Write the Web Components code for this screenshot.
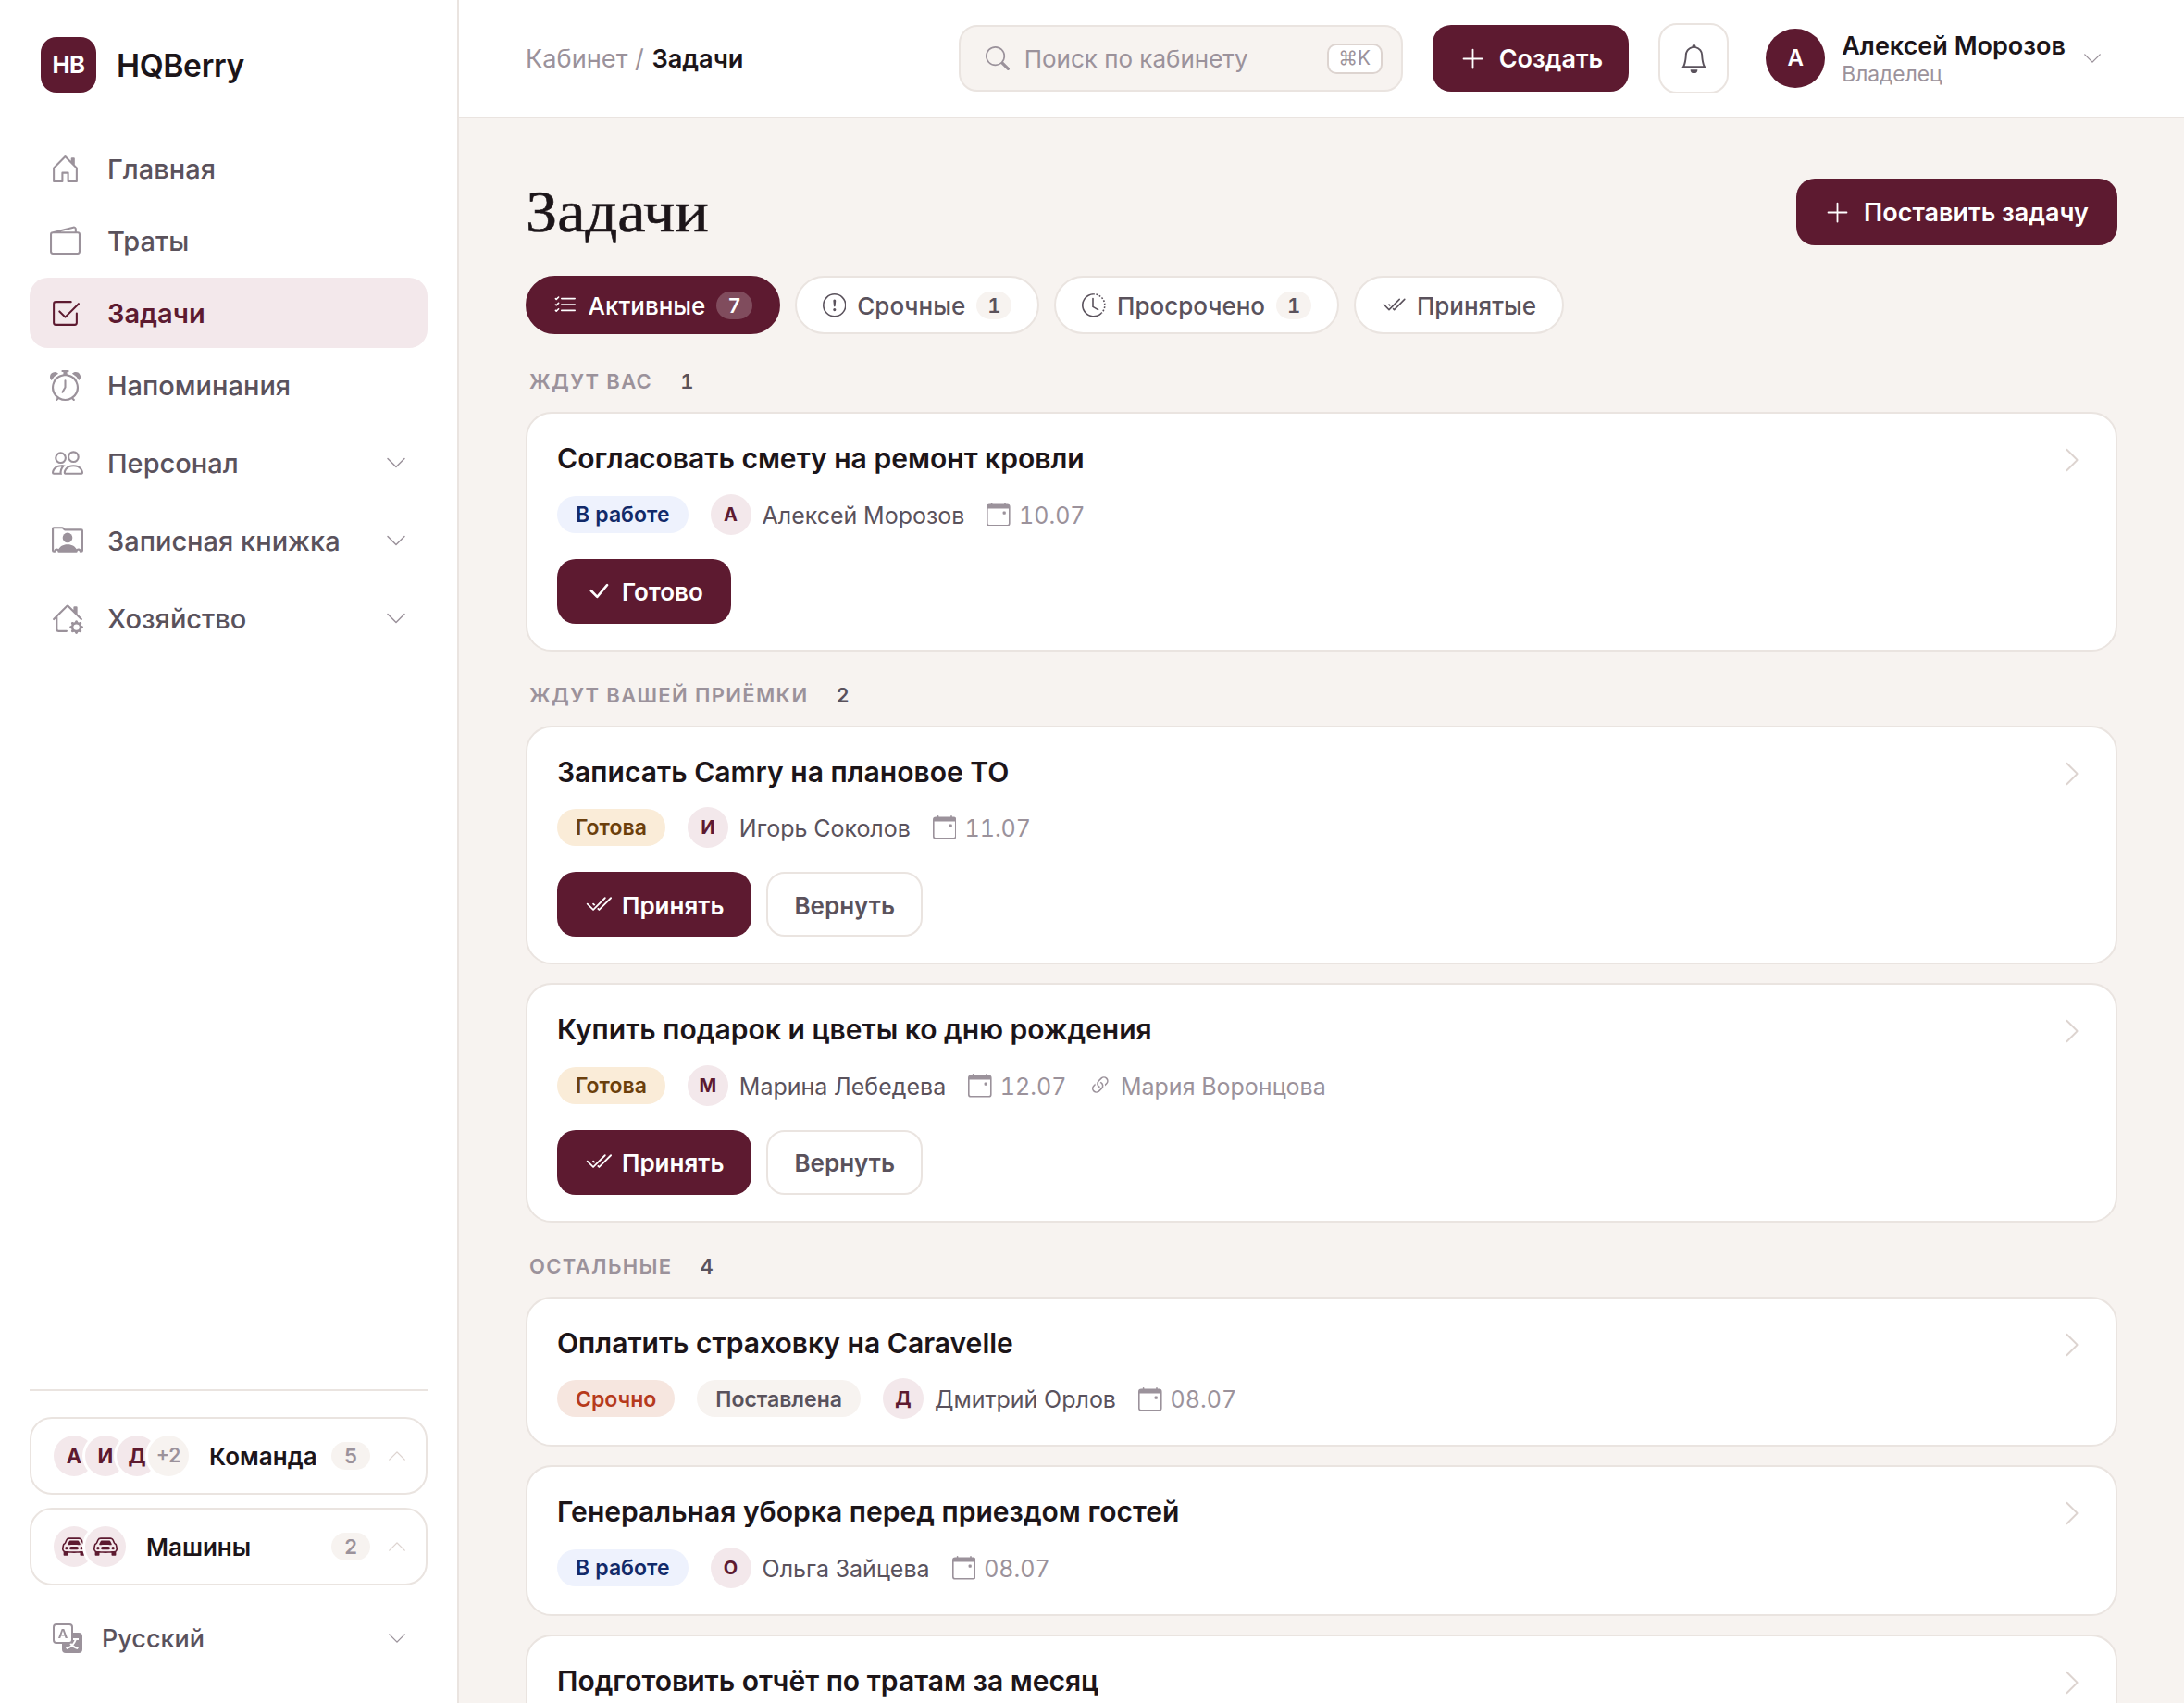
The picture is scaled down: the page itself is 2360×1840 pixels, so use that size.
<!DOCTYPE html>
<html lang="ru">
<head>
<meta charset="utf-8">
<title>HQBerry</title>
<style>
    html, body {
        margin: 0;
        height: 100%;
    }
    body {
        --brand: #5d1a30;
        --brand-soft: #f3e8eb;
        --ink: #1c1519;
        --text: #5a525c;
        --muted: #9b929b;
        --line: #eae4e0;
        --faint: #ddd4d0;
        --bg: #f7f3f0;
        background: var(--bg);
        color: var(--ink);
        font-family: Inter, "Liberation Sans", sans-serif;
        font-size: 28px;
        line-height: 1.2;
        overflow: hidden;
    }
</style>
</head>
<body>
<hq-app></hq-app>

<script>
const ICONS = {
    house: '<path d="M8.354 1.146a.5.5 0 0 0-.708 0l-6 6A.5.5 0 0 0 1.5 7.5v7a.5.5 0 0 0 .5.5h4.5a.5.5 0 0 0 .5-.5v-4h2v4a.5.5 0 0 0 .5.5H14a.5.5 0 0 0 .5-.5v-7a.5.5 0 0 0-.146-.354L13 5.793V2.5a.5.5 0 0 0-.5-.5h-1a.5.5 0 0 0-.5.5v1.293zM2.5 14V7.707l5.5-5.5 5.5 5.5V14H10v-4a.5.5 0 0 0-.5-.5h-3a.5.5 0 0 0-.5.5v4z"/>',
    wallet: '<path d="M12.136.326A1.5 1.5 0 0 1 14 1.78V3h.5A1.5 1.5 0 0 1 16 4.5v9a1.5 1.5 0 0 1-1.5 1.5h-13A1.5 1.5 0 0 1 0 13.5v-9a1.5 1.5 0 0 1 1.432-1.499zM5.562 3H13V1.78a.5.5 0 0 0-.621-.484zM1.5 4a.5.5 0 0 0-.5.5v9a.5.5 0 0 0 .5.5h13a.5.5 0 0 0 .5-.5v-9a.5.5 0 0 0-.5-.5z"/>',
    tasks: '<path d="M3 14.5A1.5 1.5 0 0 1 1.5 13V3A1.5 1.5 0 0 1 3 1.5h8a.5.5 0 0 1 0 1H3a.5.5 0 0 0-.5.5v10a.5.5 0 0 0 .5.5h10a.5.5 0 0 0 .5-.5V8a.5.5 0 0 1 1 0v5a1.5 1.5 0 0 1-1.5 1.5z"/><path d="m8.354 10.354 7-7a.5.5 0 0 0-.708-.708L8 9.293 5.354 6.646a.5.5 0 1 0-.708.708l3 3a.5.5 0 0 0 .708 0"/>',
    alarm: '<path d="M8.5 5.5a.5.5 0 0 0-1 0v3.362l-1.429 2.38a.5.5 0 1 0 .858.515l1.5-2.5A.5.5 0 0 0 8.5 9z"/><path d="M6.5 0a.5.5 0 0 0 0 1H7v1.07a7.001 7.001 0 0 0-3.273 12.474l-.602.602a.5.5 0 0 0 .707.708l.746-.746A6.97 6.97 0 0 0 8 16a6.97 6.97 0 0 0 3.422-.892l.746.746a.5.5 0 0 0 .707-.708l-.601-.602A7.001 7.001 0 0 0 9 2.07V1h.5a.5.5 0 0 0 0-1zm1.038 3.018a6 6 0 0 1 .924 0 6 6 0 1 1-.924 0M0 3.5c0 .753.333 1.429.86 1.887A8.04 8.04 0 0 1 4.387 1.86 2.5 2.5 0 0 0 0 3.5M13.5 1c-.753 0-1.429.333-1.887.86a8.04 8.04 0 0 1 3.527 3.527A2.5 2.5 0 0 0 13.5 1"/>',
    people: '<path d="M15 14s1 0 1-1-1-4-5-4-5 3-5 4 1 1 1 1zm-7.978-1L7 12.996c.001-.264.167-1.03.76-1.72C8.312 10.629 9.282 10 11 10c1.717 0 2.687.63 3.24 1.276.593.69.758 1.457.76 1.72l-.008.002-.014.002zM11 7a2 2 0 1 0 0-4 2 2 0 0 0 0 4m3-2a3 3 0 1 1-6 0 3 3 0 0 1 6 0M6.936 9.28a6 6 0 0 0-1.23-.247A7 7 0 0 0 5 9c-4 0-5 3-5 4q0 1 1 1h4.216A2.24 2.24 0 0 1 5 13c0-1.01.377-2.042 1.09-2.904.243-.294.526-.569.846-.816M4.92 10A5.5 5.5 0 0 0 4 13H1c0-.26.164-1.03.76-1.724.545-.636 1.492-1.256 3.16-1.275ZM1.5 5.5a3 3 0 1 1 6 0 3 3 0 0 1-6 0m3-2a2 2 0 1 0 0 4 2 2 0 0 0 0-4"/>',
    rolodex: '<path d="M8 9.05a2.5 2.5 0 1 0 0-5 2.5 2.5 0 0 0 0 5"/><path d="M1 1a1 1 0 0 0-1 1v11a1 1 0 0 0 1 1h.5a.5.5 0 0 0 .5-.5.5.5 0 0 1 1 0 .5.5 0 0 0 .5.5h9a.5.5 0 0 0 .5-.5.5.5 0 0 1 1 0 .5.5 0 0 0 .5.5h.5a1 1 0 0 0 1-1V3a1 1 0 0 0-1-1H6.707L6 1.293A1 1 0 0 0 5.293 1zm0 1h4.293L6 2.707A1 1 0 0 0 6.707 3H15v10h-.085a1.5 1.5 0 0 0-2.4-.63C11.885 11.223 10.554 10 8 10c-2.555 0-3.886 1.224-4.514 2.37a1.5 1.5 0 0 0-2.4.63H1z"/>',
    houseGear: '<path d="M7.293 1.5a1 1 0 0 1 1.414 0L11 3.793V2.5a.5.5 0 0 1 .5-.5h1a.5.5 0 0 1 .5.5v3.293l2.354 2.353a.5.5 0 0 1-.708.708L8 2.207l-5 5V13.5a.5.5 0 0 0 .5.5h4a.5.5 0 0 1 0 1h-4A1.5 1.5 0 0 1 2 13.5V8.207l-.646.647a.5.5 0 1 1-.708-.708z"/><path d="M11.886 9.46c.18-.613 1.048-.613 1.229 0l.043.148a.64.64 0 0 0 .921.382l.136-.074c.561-.306 1.175.308.87.869l-.075.136a.64.64 0 0 0 .382.92l.149.045c.612.18.612 1.048 0 1.229l-.15.043a.64.64 0 0 0-.38.921l.074.136c.305.561-.309 1.175-.87.87l-.136-.075a.64.64 0 0 0-.92.382l-.045.149c-.18.612-1.048.612-1.229 0l-.043-.15a.64.64 0 0 0-.921-.38l-.136.074c-.561.305-1.175-.309-.87-.87l.075-.136a.64.64 0 0 0-.382-.92l-.148-.044c-.613-.181-.613-1.049 0-1.23l.148-.043a.64.64 0 0 0 .382-.921l-.074-.136c-.306-.561.308-1.175.869-.87l.136.075a.64.64 0 0 0 .92-.382zM14 12.5a1.5 1.5 0 1 0-3 0 1.5 1.5 0 0 0 3 0"/>',
    search: '<path d="M11.742 10.344a6.5 6.5 0 1 0-1.397 1.398h-.001q.044.06.098.115l3.85 3.85a1 1 0 0 0 1.415-1.414l-3.85-3.85a1 1 0 0 0-.115-.1zM12 6.5a5.5 5.5 0 1 1-11 0 5.5 5.5 0 0 1 11 0"/>',
    bell: '<path d="M8 16a2 2 0 0 0 2-2H6a2 2 0 0 0 2 2M8 1.918l-.797.161A4 4 0 0 0 4 6c0 .628-.134 2.197-.459 3.742-.16.767-.376 1.566-.663 2.258h10.244c-.287-.692-.502-1.49-.663-2.258C12.134 8.197 12 6.628 12 6a4 4 0 0 0-3.203-3.92zM14.22 12c.223.447.481.801.78 1H1c.299-.199.557-.553.78-1C2.68 10.2 3 6.88 3 6c0-2.42 1.72-4.44 4.005-4.901a1 1 0 1 1 1.99 0A5 5 0 0 1 13 6c0 .88.32 4.2 1.22 6"/>',
    plus: '<path d="M8 2a.5.5 0 0 1 .5.5v5h5a.5.5 0 0 1 0 1h-5v5a.5.5 0 0 1-1 0v-5h-5a.5.5 0 0 1 0-1h5v-5A.5.5 0 0 1 8 2"/>',
    down: '<path d="M1.646 4.646a.5.5 0 0 1 .708 0L8 10.293l5.646-5.647a.5.5 0 0 1 .708.708l-6 6a.5.5 0 0 1-.708 0l-6-6a.5.5 0 0 1 0-.708"/>',
    up: '<path d="M7.646 4.646a.5.5 0 0 1 .708 0l6 6a.5.5 0 0 1-.708.708L8 5.707l-5.646 5.647a.5.5 0 0 1-.708-.708z"/>',
    right: '<path d="M4.646 1.646a.5.5 0 0 1 .708 0l6 6a.5.5 0 0 1 0 .708l-6 6a.5.5 0 0 1-.708-.708L10.293 8 4.646 2.354a.5.5 0 0 1 0-.708"/>',
    list: '<path d="M5 11.5a.5.5 0 0 1 .5-.5h9a.5.5 0 0 1 0 1h-9a.5.5 0 0 1-.5-.5m0-4a.5.5 0 0 1 .5-.5h9a.5.5 0 0 1 0 1h-9a.5.5 0 0 1-.5-.5m0-4a.5.5 0 0 1 .5-.5h9a.5.5 0 0 1 0 1h-9a.5.5 0 0 1-.5-.5M3.854 2.146a.5.5 0 0 1 0 .708l-1.5 1.5a.5.5 0 0 1-.708 0l-.5-.5a.5.5 0 1 1 .708-.708L2 3.293l1.146-1.147a.5.5 0 0 1 .708 0m0 4a.5.5 0 0 1 0 .708l-1.5 1.5a.5.5 0 0 1-.708 0l-.5-.5a.5.5 0 1 1 .708-.708L2 7.293l1.146-1.147a.5.5 0 0 1 .708 0m0 4a.5.5 0 0 1 0 .708l-1.5 1.5a.5.5 0 0 1-.708 0l-.5-.5a.5.5 0 0 1 .708-.708l.146.147 1.146-1.147a.5.5 0 0 1 .708 0"/>',
    alert: '<path d="M8 15A7 7 0 1 1 8 1a7 7 0 0 1 0 14m0 1A8 8 0 1 0 8 0a8 8 0 0 0 0 16"/><path d="M7.002 11a1 1 0 1 1 2 0 1 1 0 0 1-2 0M7.1 4.995a.905.905 0 1 1 1.8 0l-.35 3.507a.552.552 0 0 1-1.1 0z"/>',
    clock: '<path d="M8.515 1.019A7 7 0 0 0 8 1V0a8 8 0 0 1 .589.022zm2.004.45a7 7 0 0 0-.985-.299l.219-.976q.576.129 1.126.342zm1.37.71a7 7 0 0 0-.439-.27l.493-.87a8 8 0 0 1 .979.654l-.615.789a7 7 0 0 0-.418-.302zm1.834 1.79a7 7 0 0 0-.653-.796l.724-.69q.406.429.747.91zm.744 1.352a7 7 0 0 0-.214-.468l.893-.45a8 8 0 0 1 .45 1.088l-.95.313a7 7 0 0 0-.179-.483m.53 2.507a7 7 0 0 0-.1-1.025l.985-.17q.1.58.116 1.17zm-.131 1.538q.05-.254.081-.51l.993.123a8 8 0 0 1-.23 1.155l-.964-.267q.069-.247.12-.501m-.952 2.379q.276-.436.486-.908l.914.405q-.24.54-.555 1.038zm-.964 1.205q.183-.183.35-.378l.758.653a8 8 0 0 1-.401.432z"/><path d="M8 1a7 7 0 1 0 4.95 11.95l.707.707A8.001 8.001 0 1 1 8 0z"/><path d="M7.5 3a.5.5 0 0 1 .5.5v5.21l3.248 1.856a.5.5 0 0 1-.496.868l-3.5-2A.5.5 0 0 1 7 9V3.5a.5.5 0 0 1 .5-.5"/>',
    checkAll: '<path d="M12.354 4.354a.5.5 0 0 0-.708-.708L5 10.293 1.854 7.146a.5.5 0 1 0-.708.708l3.5 3.5a.5.5 0 0 0 .708 0zm-4.208 7-.896-.897.707-.707.543.543 6.646-6.647a.5.5 0 0 1 .708.708l-7 7a.5.5 0 0 1-.708 0"/><path d="m5.354 7.146.896.897-.707.707-.897-.896a.5.5 0 1 1 .708-.708"/>',
    check: '<path d="M12.736 3.97a.733.733 0 0 1 1.047 0c.286.289.29.756.01 1.05L7.88 12.01a.733.733 0 0 1-1.065.02L3.217 8.384a.757.757 0 0 1 0-1.06.733.733 0 0 1 1.047 0l3.052 3.093 5.4-6.425z"/>',
    calendar: '<path d="M11 6.5a.5.5 0 0 1 .5-.5h1a.5.5 0 0 1 .5.5v1a.5.5 0 0 1-.5.5h-1a.5.5 0 0 1-.5-.5z"/><path d="M3.5 0a.5.5 0 0 1 .5.5V1h8V.5a.5.5 0 0 1 1 0V1h1a2 2 0 0 1 2 2v11a2 2 0 0 1-2 2H2a2 2 0 0 1-2-2V3a2 2 0 0 1 2-2h1V.5a.5.5 0 0 1 .5-.5M1 4v10a1 1 0 0 0 1 1h12a1 1 0 0 0 1-1V4z"/>',
    link: '<path d="M4.715 6.542 3.343 7.914a3 3 0 1 0 4.243 4.243l1.828-1.829A3 3 0 0 0 8.586 5.5L8 6.086a1 1 0 0 0-.154.199 2 2 0 0 1 .861 3.337L6.88 11.45a2 2 0 1 1-2.83-2.83l.793-.792a4 4 0 0 1-.128-1.287z"/><path d="M6.586 4.672A3 3 0 0 0 7.414 9.5l.775-.776a2 2 0 0 1-.896-3.346L9.12 3.55a2 2 0 1 1 2.83 2.83l-.793.792c.112.42.155.855.128 1.287l1.372-1.372a3 3 0 1 0-4.243-4.243z"/>',
    car: '<path d="M4 9a1 1 0 1 1-2 0 1 1 0 0 1 2 0m10 0a1 1 0 1 1-2 0 1 1 0 0 1 2 0M6 8a1 1 0 0 0 0 2h4a1 1 0 1 0 0-2zM4.862 4.276 3.906 6.19a.51.51 0 0 0 .497.731c.91-.073 2.35-.17 3.597-.17s2.688.097 3.597.17a.51.51 0 0 0 .497-.731l-.956-1.913A.5.5 0 0 0 10.691 4H5.309a.5.5 0 0 0-.447.276"/><path d="M2.52 3.515A2.5 2.5 0 0 1 4.82 2h6.362c1 0 1.904.596 2.298 1.515l.792 1.848c.075.175.21.319.38.404.5.25.855.715.965 1.262l.335 1.679q.05.242.049.49v.413c0 .814-.39 1.543-1 1.997V13.5a.5.5 0 0 1-.5.5h-2a.5.5 0 0 1-.5-.5v-1.338c-1.292.048-2.745.088-4 .088s-2.708-.04-4-.088V13.5a.5.5 0 0 1-.5.5h-2a.5.5 0 0 1-.5-.5v-1.892c-.61-.454-1-1.183-1-1.997v-.413a2.5 2.5 0 0 1 .049-.49l.335-1.68c.11-.546.465-1.012.964-1.261a.8.8 0 0 0 .381-.404zM4.82 3a1.5 1.5 0 0 0-1.379.91l-.792 1.847a1.8 1.8 0 0 1-.853.904.8.8 0 0 0-.43.564L1.03 8.904a1.5 1.5 0 0 0-.03.294v.413c0 .796.62 1.448 1.408 1.484 1.555.07 3.786.155 5.592.155s4.037-.084 5.592-.155A1.48 1.48 0 0 0 15 9.611v-.413q0-.148-.03-.294l-.335-1.68a.8.8 0 0 0-.43-.563 1.8 1.8 0 0 1-.853-.904l-.792-1.848A1.5 1.5 0 0 0 11.18 3z"/>',
    translate: '<path d="M4.545 6.714 4.11 8H3l1.862-5h1.284L8 8H6.833l-.435-1.286zm1.634-.736L5.5 3.956h-.049l-.679 2.022z"/><path d="M0 2a2 2 0 0 1 2-2h7a2 2 0 0 1 2 2v3h3a2 2 0 0 1 2 2v7a2 2 0 0 1-2 2H7a2 2 0 0 1-2-2v-3H2a2 2 0 0 1-2-2zm2-1a1 1 0 0 0-1 1v7a1 1 0 0 0 1 1h7a1 1 0 0 0 1-1V2a1 1 0 0 0-1-1zm7.138 9.995q.289.451.63.846c-.748.575-1.673 1.001-2.768 1.292.178.217.451.635.555.867 1.125-.359 2.08-.844 2.886-1.494.777.665 1.739 1.165 2.93 1.472.133-.254.414-.673.629-.89-1.125-.253-2.057-.694-2.82-1.284.681-.747 1.222-1.651 1.621-2.757H14V8h-3v1.047h.765c-.318.844-.74 1.546-1.272 2.13a6 6 0 0 1-.415-.492 2 2 0 0 1-.94.31"/>'
};

class HqElement extends HTMLElement {
    constructor() {
        super();
        this.attachShadow({mode: "open"});
    }

    connectedCallback() {
        this.shadowRoot.innerHTML = this.render();
    }
}

class HqIcon extends HqElement {
    render() {
        const size = this.getAttribute("size") || 26;
        return `
        <style>
            :host { display: block; flex: none; width: ${size}px; height: ${size}px; }
            svg { display: block; width: 100%; height: 100%; }
        </style>
        <svg viewBox="0 0 16 16" fill="currentColor">${ICONS[this.getAttribute("name")]}</svg>
        `;
    }
}
customElements.define("hq-icon", HqIcon);

class HqAvatar extends HqElement {
    render() {
        return `
        <style>
            :host {
                display: flex;
                flex: none;
                align-items: center;
                justify-content: center;
                width: 44px;
                height: 44px;
                border-radius: 50%;
                background: var(--brand-soft);
                color: var(--brand);
                font-size: 20px;
                font-weight: 700;
            }
            :host([large]) {
                width: 64px;
                height: 64px;
                background: var(--brand);
                color: #fff;
                font-size: 24px;
                font-weight: 600;
            }
        </style>
        <slot></slot>
        `;
    }
}
customElements.define("hq-avatar", HqAvatar);

class HqCount extends HqElement {
    render() {
        return `
        <style>
            :host {
                display: flex;
                flex: none;
                box-sizing: border-box;
                align-items: center;
                justify-content: center;
                height: 30px;
                min-width: 38px;
                padding: 1px 12px 0;
                border-radius: 15px;
                background: var(--bg);
                font-size: 22px;
                font-weight: 600;
                font-variant-numeric: tabular-nums;
            }
        </style>
        <slot></slot>
        `;
    }
}
customElements.define("hq-count", HqCount);

class HqButton extends HqElement {
    render() {
        const icon = this.getAttribute("icon");
        return `
        <style>
            :host {
                display: flex;
                flex: none;
                box-sizing: border-box;
                align-items: center;
                gap: 14px;
                height: 72px;
                padding: 0 31px 0 30px;
                border-radius: 20px;
                background: var(--brand);
                color: #fff;
                font-size: 27px;
                font-weight: 600;
                white-space: nowrap;
            }
            :host([small]) {
                height: 70px;
                gap: 11px;
                padding: 0 30px;
                font-size: 26px;
            }
            :host([plain]) {
                background: #fff;
                border: 2px solid var(--line);
                padding: 0 28px;
                color: var(--text);
            }
            span { padding-top: 2px; }
        </style>
        ${icon ? `<hq-icon name="${icon}" size="29"></hq-icon>` : ""}<span><slot></slot></span>
        `;
    }
}
customElements.define("hq-button", HqButton);

class HqChip extends HqElement {
    render() {
        const count = this.getAttribute("count");
        return `
        <style>
            :host {
                display: flex;
                box-sizing: border-box;
                align-items: center;
                gap: 12px;
                height: 63px;
                padding: 0 28px;
                border: 2px solid var(--line);
                border-radius: 32px;
                background: #fff;
                color: var(--text);
                font-size: 26px;
                font-weight: 500;
            }
            :host([active]) {
                background: var(--brand);
                border-color: var(--brand);
                color: #fff;
            }
            :host([active]) hq-count { background: rgba(255, 255, 255, .22); }
            span { padding-top: 2px; }
        </style>
        <hq-icon name="${this.getAttribute("icon")}" size="25.6"></hq-icon>
        <span><slot></slot></span>
        ${count ? `<hq-count>${count}</hq-count>` : ""}
        `;
    }
}
customElements.define("hq-chip", HqChip);

class HqNavItem extends HqElement {
    render() {
        const group = this.hasAttribute("group");
        return `
        <style>
            :host {
                display: flex;
                box-sizing: border-box;
                align-items: center;
                gap: 29px;
                height: 76px;
                padding: 0 22px;
                margin-bottom: 2px;
                border-radius: 20px;
                color: var(--text);
                font-size: 29px;
                font-weight: 500;
            }
            :host([active]) {
                background: var(--brand-soft);
                color: var(--brand);
                font-weight: 600;
            }
            :host([group]) {
                gap: 26px;
                padding-left: 24px;
                margin: 8px 0;
            }
            .icon { color: var(--muted); }
            :host([active]) .icon { color: inherit; }
            .label { flex: 1; padding-top: 2px; }
            .arrow { color: var(--muted); }
        </style>
        <hq-icon class="icon" name="${this.getAttribute("icon")}" size="${group ? 34 : 33}"></hq-icon>
        <span class="label"><slot></slot></span>
        ${group ? '<hq-icon class="arrow" name="down" size="24"></hq-icon>' : ""}
        `;
    }
}
customElements.define("hq-nav-item", HqNavItem);

class HqDock extends HqElement {
    render() {
        return `
        <style>
            :host {
                display: flex;
                box-sizing: border-box;
                align-items: center;
                height: 84px;
                padding: 0 20px 0 24px;
                border: 2px solid var(--line);
                border-radius: 24px;
                font-size: 26px;
                font-weight: 600;
            }
            .stack { display: flex; margin-right: 22px; }
            ::slotted(hq-avatar) {
                margin-right: -10px;
                box-shadow: 0 0 0 3px #fff;
                font-size: 22px;
            }
            ::slotted(hq-avatar:last-of-type) { margin-right: 0; }
            .label { flex: 1; padding-top: 2px; }
            hq-count { min-width: 42px; margin-right: 18px; color: var(--muted); }
            hq-icon { color: var(--faint); }
        </style>
        <div class="stack"><slot></slot></div>
        <span class="label">${this.getAttribute("label")}</span>
        <hq-count>${this.getAttribute("count")}</hq-count>
        <hq-icon name="up" size="22"></hq-icon>
        `;
    }
}
customElements.define("hq-dock", HqDock);

class HqSidebar extends HqElement {
    render() {
        return `
        <style>
            :host {
                display: flex;
                flex-direction: column;
                box-sizing: border-box;
                width: 496px;
                height: 1840px;
                padding: 40px 32px 32px;
                border-right: 2px solid var(--line);
                background: #fff;
            }
            .brand {
                display: flex;
                align-items: center;
                gap: 22px;
                margin: 0 0 44px 12px;
                font-size: 33.6px;
                font-weight: 600;
                letter-spacing: -.01em;
            }
            .brand span { padding-top: 2px; }
            .logo {
                display: flex;
                box-sizing: border-box;
                align-items: center;
                justify-content: center;
                width: 60px;
                height: 60px;
                padding-top: 1px;
                border-radius: 17px;
                background: var(--brand);
                color: #fff;
                font-size: 25.6px;
                font-weight: 700;
                letter-spacing: -.02em;
            }
            .bottom {
                display: flex;
                flex-direction: column;
                gap: 14px;
                margin-top: auto;
                padding-top: 28px;
                border-top: 2px solid var(--line);
            }
            .more { background: var(--bg); color: var(--muted); }
            .lang {
                display: flex;
                align-items: center;
                gap: 21px;
                height: 76px;
                margin-top: 5px;
                padding: 0 22px 0 25px;
                color: var(--text);
                font-size: 27px;
                font-weight: 500;
            }
            .lang span { flex: 1; padding-top: 2px; }
            .lang hq-icon { color: var(--muted); }
        </style>
        <div class="brand"><div class="logo">HB</div><span>HQBerry</span></div>
        <hq-nav-item icon="house">Главная</hq-nav-item>
        <hq-nav-item icon="wallet">Траты</hq-nav-item>
        <hq-nav-item icon="tasks" active>Задачи</hq-nav-item>
        <hq-nav-item icon="alarm">Напоминания</hq-nav-item>
        <hq-nav-item icon="people" group style="margin-top: 6px; margin-bottom: 0">Персонал</hq-nav-item>
        <hq-nav-item icon="rolodex" group style="margin-bottom: 0">Записная книжка</hq-nav-item>
        <hq-nav-item icon="houseGear" group>Хозяйство</hq-nav-item>
        <div class="bottom">
            <hq-dock label="Команда" count="5">
                <hq-avatar>А</hq-avatar><hq-avatar>И</hq-avatar><hq-avatar>Д</hq-avatar><hq-avatar class="more" style="font-size: 21px; font-weight: 600">+2</hq-avatar>
            </hq-dock>
            <hq-dock label="Машины" count="2">
                <hq-avatar><hq-icon name="car" size="26"></hq-icon></hq-avatar><hq-avatar><hq-icon name="car" size="26"></hq-icon></hq-avatar>
            </hq-dock>
            <div class="lang">
                <hq-icon name="translate" size="32"></hq-icon>
                <span>Русский</span>
                <hq-icon name="down" size="22"></hq-icon>
            </div>
        </div>
        `;
    }
}
customElements.define("hq-sidebar", HqSidebar);

class HqTopbar extends HqElement {
    render() {
        return `
        <style>
            :host {
                display: flex;
                box-sizing: border-box;
                align-items: center;
                gap: 32px;
                height: 128px;
                padding: 0 72px;
                border-bottom: 2px solid var(--line);
                background: #fff;
            }
            .crumbs { margin-right: auto; padding-top: 2px; color: var(--muted); font-size: 27.2px; }
            .crumbs b { margin-left: 1px; color: var(--ink); font-weight: 600; }
            .search {
                display: flex;
                box-sizing: border-box;
                align-items: center;
                width: 480px;
                height: 72px;
                padding: 0 20px 0 27px;
                border: 2px solid var(--line);
                border-radius: 20px;
                background: var(--bg);
                color: var(--muted);
                font-size: 26px;
            }
            .search span { flex: 1; margin-left: 16px; padding-top: 2px; }
            kbd {
                display: flex;
                box-sizing: border-box;
                align-items: center;
                justify-content: center;
                width: 60px;
                height: 33px;
                padding-top: 1px;
                border: 2px solid var(--faint);
                border-radius: 10px;
                background: #fff;
                font-family: inherit;
                font-size: 20.8px;
            }
            .create { padding: 0 28px 0 29px; }
            .bell {
                display: flex;
                box-sizing: border-box;
                align-items: center;
                justify-content: center;
                width: 76px;
                height: 76px;
                border: 2px solid var(--line);
                border-radius: 20px;
                color: var(--text);
            }
            .user { display: flex; align-items: center; padding: 0 16px 0 8px; color: var(--muted); }
            .who { margin: 0 18px 0 18px; padding-top: 1px; }
            .name { color: var(--ink); font-size: 27px; font-weight: 600; line-height: 32px; }
            .role { font-size: 22.8px; line-height: 28px; }
        </style>
        <div class="crumbs">Кабинет / <b>Задачи</b></div>
        <div class="search">
            <hq-icon name="search" size="26"></hq-icon>
            <span>Поиск по кабинету</span>
            <kbd>⌘K</kbd>
        </div>
        <hq-button class="create" icon="plus">Создать</hq-button>
        <div class="bell"><hq-icon name="bell" size="31"></hq-icon></div>
        <div class="user">
            <hq-avatar large>А</hq-avatar>
            <div class="who">
                <div class="name">Алексей Морозов</div>
                <div class="role">Владелец</div>
            </div>
            <hq-icon name="down" size="22"></hq-icon>
        </div>
        `;
    }
}
customElements.define("hq-topbar", HqTopbar);

class HqBadge extends HqElement {
    render() {
        return `
        <style>
            :host {
                display: flex;
                box-sizing: border-box;
                align-items: center;
                height: 40px;
                padding: 2px 20px 0;
                border-radius: 20px;
                background: var(--bg);
                color: var(--text);
                font-size: 23px;
                font-weight: 600;
            }
            :host([tone="work"]) { background: #eef2fd; color: #122a69; }
            :host([tone="done"]) { background: #faecd8; color: #6b3f0c; }
            :host([tone="urgent"]) { background: #f6e6df; color: #b63a1c; }
        </style>
        <slot></slot>
        `;
    }
}
customElements.define("hq-badge", HqBadge);

class HqTask extends HqElement {
    meta() {
        const who = this.getAttribute("who");
        const link = this.getAttribute("link");
        if (!who) return "";
        return `
            <div class="meta">
                <slot name="badge"></slot>
                <div class="who"><hq-avatar>${who[0]}</hq-avatar><span>${who}</span></div>
                <div><hq-icon name="calendar" size="25.6"></hq-icon><span>${this.getAttribute("date")}</span></div>
                ${link ? `<div><hq-icon name="link" size="25.6"></hq-icon><span>${link}</span></div>` : ""}
            </div>
        `;
    }

    render() {
        return `
        <style>
            :host {
                display: flex;
                box-sizing: border-box;
                justify-content: space-between;
                margin-bottom: 20px;
                padding: 28px 32px;
                border: 2px solid var(--line);
                border-radius: 28px;
                background: #fff;
            }
            h3 {
                margin: 0 0 19px;
                padding-top: 1px;
                font-size: 30.05px;
                font-weight: 600;
                line-height: 38.6px;
            }
            .meta {
                display: flex;
                align-items: center;
                gap: 24px;
                color: var(--muted);
                font-size: 25px;
                font-variant-numeric: tabular-nums;
            }
            .meta div { display: flex; align-items: center; gap: 9px; }
            .meta .who { gap: 12px; color: var(--text); }
            .meta span { padding-top: 2px; }
            ::slotted(hq-button) { margin-top: 26px; }
            .actions { display: flex; gap: 16px; }
            .arrow { margin-top: 7px; color: var(--faint); }
        </style>
        <div>
            <h3>${this.getAttribute("label")}</h3>
            ${this.meta()}
            <div class="actions"><slot></slot></div>
        </div>
        <hq-icon class="arrow" name="right" size="30"></hq-icon>
        `;
    }
}
customElements.define("hq-task", HqTask);

class HqSection extends HqElement {
    render() {
        return `
        <style>
            :host { display: block; margin-bottom: 10px; }
            header {
                display: flex;
                gap: 30px;
                margin: 0 0 16px 4px;
                padding-top: 10px;
                line-height: 34px;
                color: var(--muted);
                font-size: 22px;
                font-weight: 600;
            }
            .label { letter-spacing: .061em; text-transform: uppercase; }
            b { color: var(--text); font-weight: 600; font-variant-numeric: tabular-nums; }
        </style>
        <header><span class="label">${this.getAttribute("label")}</span><b>${this.getAttribute("count")}</b></header>
        <slot></slot>
        `;
    }
}
customElements.define("hq-section", HqSection);

class HqApp extends HqElement {
    render() {
        return `
        <style>
            :host { display: grid; grid-template-columns: 496px 1fr; height: 1840px; overflow: hidden; }
            .page { min-width: 0; }
            main { padding: 65px 72px 0; }
            .head { display: flex; align-items: center; justify-content: space-between; margin-bottom: 33px; }
            h1 {
                margin: 0;
                font: 400 63px/72px "Liberation Serif", serif;
                -webkit-text-stroke: .6px currentColor;
                transform: scaleX(1.085);
                transform-origin: left;
            }
            .chips { display: flex; gap: 16px; margin-bottom: 24px; }
        </style>
        <hq-sidebar></hq-sidebar>
        <div class="page">
            <hq-topbar></hq-topbar>
            <main>
                <div class="head">
                    <h1>Задачи</h1>
                    <hq-button icon="plus">Поставить задачу</hq-button>
                </div>
                <div class="chips">
                    <hq-chip icon="list" count="7" active>Активные</hq-chip>
                    <hq-chip icon="alert" count="1">Срочные</hq-chip>
                    <hq-chip icon="clock" count="1">Просрочено</hq-chip>
                    <hq-chip icon="checkAll">Принятые</hq-chip>
                </div>
                <hq-section label="Ждут вас" count="1">
                    <hq-task label="Согласовать смету на ремонт кровли" who="Алексей Морозов" date="10.07">
                        <hq-badge slot="badge" tone="work">В работе</hq-badge>
                        <hq-button small icon="check">Готово</hq-button>
                    </hq-task>
                </hq-section>
                <hq-section label="Ждут вашей приёмки" count="2">
                    <hq-task label="Записать Camry на плановое ТО" who="Игорь Соколов" date="11.07">
                        <hq-badge slot="badge" tone="done">Готова</hq-badge>
                        <hq-button small icon="checkAll">Принять</hq-button>
                        <hq-button small plain>Вернуть</hq-button>
                    </hq-task>
                    <hq-task label="Купить подарок и цветы ко дню рождения" who="Марина Лебедева" date="12.07" link="Мария Воронцова">
                        <hq-badge slot="badge" tone="done">Готова</hq-badge>
                        <hq-button small icon="checkAll">Принять</hq-button>
                        <hq-button small plain>Вернуть</hq-button>
                    </hq-task>
                </hq-section>
                <hq-section label="Остальные" count="4">
                    <hq-task label="Оплатить страховку на Caravelle" who="Дмитрий Орлов" date="08.07">
                        <hq-badge slot="badge" tone="urgent">Срочно</hq-badge>
                        <hq-badge slot="badge">Поставлена</hq-badge>
                    </hq-task>
                    <hq-task label="Генеральная уборка перед приездом гостей" who="Ольга Зайцева" date="08.07">
                        <hq-badge slot="badge" tone="work">В работе</hq-badge>
                    </hq-task>
                    <hq-task label="Подготовить отчёт по тратам за месяц"></hq-task>
                </hq-section>
            </main>
        </div>
        `;
    }
}
customElements.define("hq-app", HqApp);
</script>
</body>
</html>
